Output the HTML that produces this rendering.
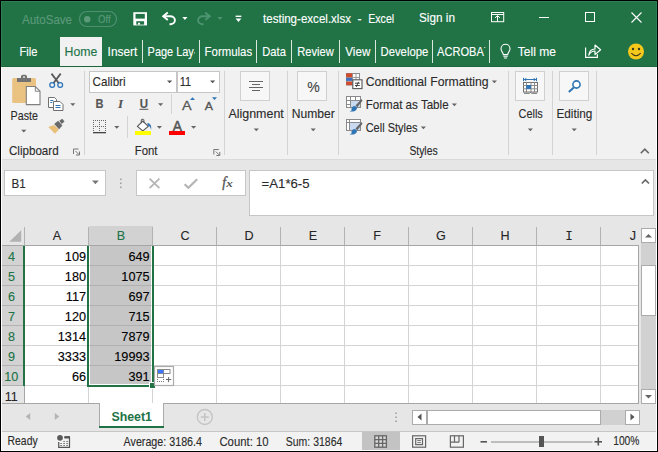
<!DOCTYPE html>
<html><head><meta charset="utf-8"><title>testing-excel.xlsx - Excel</title>
<style>
html,body{margin:0;padding:0;background:#000;overflow:hidden}
svg{display:block}
text{font-family:"Liberation Sans",sans-serif}
</style></head><body>
<svg width="658" height="452" viewBox="0 0 658 452">
<rect x="0" y="0" width="658" height="452" fill="#000" />
<rect x="1" y="1" width="656" height="66" fill="#217346" />
<rect x="1" y="67" width="656" height="92" fill="#f1f1f1" />
<rect x="1" y="159" width="656" height="1" fill="#dadada"/>
<rect x="1" y="160" width="656" height="66" fill="#e6e6e6" />
<text x="22" y="23.5" font-size="12.2" fill="#5c9a7a" stroke="#5c9a7a" stroke-width="0.12" textLength="50" lengthAdjust="spacingAndGlyphs" >AutoSave</text>
<rect x="79.5" y="11.5" width="37" height="15" rx="7.5" fill="none" stroke="#4f9070" stroke-width="1.2"/>
<circle cx="87.2" cy="19.2" r="3.2" fill="#5c9a7a"/>
<text x="98" y="23.3" font-size="10.5" fill="#5c9a7a" stroke="#5c9a7a" stroke-width="0.12" textLength="12.6" lengthAdjust="spacingAndGlyphs" >Off</text>
<rect x="133.300" y="12.200" width="13.700" height="13.200" fill="#fff"/>
<rect x="135.500" y="13.900" width="9.300" height="4.700" fill="#217346"/>
<rect x="136.300" y="21.200" width="7.800" height="3.400" fill="#217346"/>
<rect x="138" y="22.800" width="2" height="1.800" fill="#fff"/>
<g fill="none" stroke="#fff" stroke-width="1.900" stroke-linecap="butt"><path d="M163.500 16.200h6.800a4.600 4 0 0 1 0 8h-0.800"/><path d="M167.800 12.400l-4.600 3.800l4.600 3.800" stroke-linejoin="miter"/></g>
<path d="M182.3 17h5.2l-2.6 3z" fill="#fff"/>
<g fill="none" stroke="#4d9470" stroke-width="1.900"><path d="M209.500 16.200h-6.800a4.600 4 0 0 0 0 8h0.800"/><path d="M205.200 12.400l4.600 3.800l-4.600 3.800"/></g>
<path d="M217.4 17h5.2l-2.6 3z" fill="#4d9470"/>
<rect x="235.6" y="15.6" width="5.800000000000011" height="1.4" fill="#fff"/>
<path d="M235.6 18.4h5.8l-2.9 3.5z" fill="#fff"/>
<text x="263" y="22.6" font-size="12.2" fill="#fff" stroke="#fff" stroke-width="0.12" textLength="88" lengthAdjust="spacingAndGlyphs" >testing-excel.xlsx</text>
<text x="357.6" y="22.6" font-size="12.2" fill="#fff" stroke="#fff" stroke-width="0.12" >-</text>
<text x="368.2" y="22.6" font-size="12.2" fill="#fff" stroke="#fff" stroke-width="0.12" textLength="26" lengthAdjust="spacingAndGlyphs" >Excel</text>
<text x="419" y="21.6" font-size="12.2" fill="#fff" stroke="#fff" stroke-width="0.12" textLength="36" lengthAdjust="spacingAndGlyphs" >Sign in</text>
<g fill="none" stroke="#fff" stroke-width="1"><rect x="491.500" y="12.500" width="12.200" height="9.200"/><path d="M491.500 14.500h12.200"/><path d="M497.500 21.500v-5.600M495 17.900l2.500-2.300l2.500 2.300"/></g>
<rect x="539" y="17" width="10" height="1" fill="#fff"/>
<rect x="585.5" y="12.5" width="9" height="9" fill="none" stroke="#fff"/>
<path d="M631.5 12.5l10 10M641.5 12.5l-10 10" stroke="#fff" stroke-width="1.1" fill="none"/>
<rect x="60" y="37" width="42" height="30" fill="#f1f1f1" />
<text x="19.5" y="55.8" font-size="12.2" fill="#fff" stroke="#fff" stroke-width="0.12" textLength="18" lengthAdjust="spacingAndGlyphs" >File</text>
<text x="64.6" y="55.8" font-size="12.2" fill="#217346" stroke="#217346" stroke-width="0.12" textLength="32.8" lengthAdjust="spacingAndGlyphs" >Home</text>
<text x="107.6" y="55.8" font-size="12.2" fill="#fff" stroke="#fff" stroke-width="0.12" textLength="29.6" lengthAdjust="spacingAndGlyphs" >Insert</text>
<text x="147.6" y="55.8" font-size="12.2" fill="#fff" stroke="#fff" stroke-width="0.12" textLength="46.2" lengthAdjust="spacingAndGlyphs" >Page Lay</text>
<text x="204.6" y="55.8" font-size="12.2" fill="#fff" stroke="#fff" stroke-width="0.12" textLength="47.5" lengthAdjust="spacingAndGlyphs" >Formulas</text>
<text x="262.3" y="55.8" font-size="12.2" fill="#fff" stroke="#fff" stroke-width="0.12" textLength="23.6" lengthAdjust="spacingAndGlyphs" >Data</text>
<text x="297.3" y="55.8" font-size="12.2" fill="#fff" stroke="#fff" stroke-width="0.12" textLength="36.5" lengthAdjust="spacingAndGlyphs" >Review</text>
<text x="345.3" y="55.8" font-size="12.2" fill="#fff" stroke="#fff" stroke-width="0.12" textLength="25" lengthAdjust="spacingAndGlyphs" >View</text>
<text x="380.5" y="55.8" font-size="12.2" fill="#fff" stroke="#fff" stroke-width="0.12" textLength="47.8" lengthAdjust="spacingAndGlyphs" >Develope</text>
<text x="437" y="55.8" font-size="12.2" fill="#fff" stroke="#fff" stroke-width="0.12" textLength="46.8" lengthAdjust="spacingAndGlyphs" >ACROBA</text>
<text x="517.8" y="55.8" font-size="12.2" fill="#fff" stroke="#fff" stroke-width="0.12" textLength="38.2" lengthAdjust="spacingAndGlyphs" >Tell me</text>
<rect x="194" y="52" width="0.8" height="1.8" fill="#9cc3ad" />
<rect x="484.3" y="47" width="1" height="1" fill="#e0ede5" />
<rect x="142" y="40" width="1" height="23" fill="#dbe8e0"/>
<rect x="199" y="40" width="1" height="23" fill="#dbe8e0"/>
<rect x="256" y="40" width="1" height="23" fill="#dbe8e0"/>
<rect x="291" y="40" width="1" height="23" fill="#dbe8e0"/>
<rect x="339" y="40" width="1" height="23" fill="#dbe8e0"/>
<rect x="375" y="40" width="1" height="23" fill="#dbe8e0"/>
<rect x="432" y="40" width="1" height="23" fill="#dbe8e0"/>
<rect x="489" y="40" width="1" height="23" fill="#dbe8e0"/>
<g fill="none" stroke="#fff" stroke-width="1.100"><path d="M503.300 54.600c0-2.200-2.300-2.800-2.300-5.800a4.500 4.500 0 0 1 9 0c0 3-2.300 3.600-2.300 5.800z"/><path d="M503.300 56.300h4.400M503.900 58h3.200"/></g>
<g fill="none" stroke="#fff" stroke-width="1.200"><path d="M585.600 47.600v9.800h11.800v-3.200"/><path d="M588.700 55.200c0.400-3.800 2.600-6 6.300-6.200v-4l5.600 4.800l-5.600 4.800v-3.600c-2.800 0-4.700 1-6.300 4.200z" stroke-linejoin="round"/></g>
<circle cx="636" cy="51.500" r="8" fill="#f6c81c"/><circle cx="633" cy="49" r="1.200" fill="#3a3a1a"/><circle cx="639" cy="49" r="1.200" fill="#3a3a1a"/><path d="M631.300 53.200q4.700 5 9.400 0" fill="none" stroke="#3a3a1a" stroke-width="1.100"/>
<rect x="84" y="71" width="1" height="84" fill="#d3d3d3"/>
<rect x="224" y="71" width="1" height="84" fill="#d3d3d3"/>
<rect x="287" y="71" width="1" height="84" fill="#d3d3d3"/>
<rect x="338" y="71" width="1" height="84" fill="#d3d3d3"/>
<rect x="508" y="71" width="1" height="84" fill="#d3d3d3"/>
<rect x="552" y="71" width="1" height="84" fill="#d3d3d3"/>
<rect x="596" y="71" width="1" height="84" fill="#d3d3d3"/>
<rect x="12.200" y="77.900" width="23.800" height="25.100" rx="1.500" fill="#eac282"/>
<path d="M17 82v-4.100h4v-1.400a1.800 1.800 0 0 1 1.800-1.800h2.400a1.800 1.800 0 0 1 1.800 1.800v1.400h4v4.100z" fill="#737373"/><rect x="23" y="76.200" width="2" height="1.600" fill="#d8d8d8"/>
<path d="M26.300 86.500h9l4.700 4.700v13.400h-13.700z" fill="#fff" stroke="#808080" stroke-width="1.100"/><path d="M35.300 86.500v4.700h4.700" fill="none" stroke="#808080"/>
<text x="10.6" y="119.8" font-size="12.2" fill="#2b2b2b" stroke="#2b2b2b" stroke-width="0.12" textLength="27.4" lengthAdjust="spacingAndGlyphs" >Paste</text>
<path d="M21.2 129.8h5.2l-2.6 2.8z" fill="#666"/>
<g fill="none"><path d="M51.500 73.600l7.300 9.600M60.700 73.600l-7.300 9.600" stroke="#595959" stroke-width="1.800"/><circle cx="52.200" cy="85" r="2.400" stroke="#2f75b5" stroke-width="1.300"/><circle cx="60.200" cy="85" r="2.400" stroke="#2f75b5" stroke-width="1.300"/></g>
<g fill="#fff" stroke="#707070" stroke-width="1"><path d="M48.500 97.500h6l2 2v8h-8z"/><path d="M53.500 101.500h6.500l3 3v6h-9.500z"/></g><path d="M50.300 100.500h3M50.300 102.500h2M55.500 105.500h5M55.500 107.500h5" stroke="#2f75b5" stroke-width="1"/>
<path d="M70.2 103.3h5.2l-2.6 2.8z" fill="#666"/>
<path d="M48.300 126.900l5.600-2l5 4.700l-4 4.200z" fill="#eabf78"/><path d="M54.200 124l3.900-3.300l4.300 4.900l-3.300 3.700z" fill="#6a6a6a"/><path d="M59.300 120.800l3-2l2.200 2.600l-2.800 2.500z" fill="#6a6a6a"/>
<text x="9" y="155.2" font-size="12.2" fill="#2b2b2b" stroke="#2b2b2b" stroke-width="0.12" textLength="49.6" lengthAdjust="spacingAndGlyphs" >Clipboard</text>
<g fill="none" stroke="#777" stroke-width="1"><path d="M73.5 154.0v-5h5"/><path d="M75.5 151.0l3.500 3.500M79.5 151.5v3.500h-3.500"/></g>
<rect x="89.5" y="71.5" width="87" height="21" fill="#fff" stroke="#c6c6c6" stroke-width="1" />
<rect x="177.5" y="71.5" width="42" height="21" fill="#fff" stroke="#c6c6c6" stroke-width="1" />
<text x="92.6" y="86" font-size="12.2" fill="#2b2b2b" stroke="#2b2b2b" stroke-width="0.12" textLength="33" lengthAdjust="spacingAndGlyphs" >Calibri</text>
<path d="M167 80.4h5.2l-2.6 2.8z" fill="#555"/>
<text x="179.8" y="86" font-size="12.2" fill="#2b2b2b" stroke="#2b2b2b" stroke-width="0.12" textLength="11.4" lengthAdjust="spacingAndGlyphs" >11</text>
<path d="M210 80.4h5.2l-2.6 2.8z" fill="#555"/>
<text x="95.5" y="108" font-size="12.5" fill="#555" stroke="#555" stroke-width="0.12" textLength="8" lengthAdjust="spacingAndGlyphs" font-weight="bold" >B</text>
<text x="118" y="108" font-size="13" fill="#555" stroke="#555" stroke-width="0.12" font-weight="bold" font-style="italic" style="font-family:'Liberation Serif',serif" >I</text>
<text x="139.7" y="107.8" font-size="12" fill="#555" stroke="#555" stroke-width="0.12" textLength="8.3" lengthAdjust="spacingAndGlyphs" font-weight="bold" >U</text>
<rect x="139.5" y="108.8" width="8.800000000000011" height="1" fill="#555"/>
<path d="M158 103.3h5.2l-2.6 2.8z" fill="#666"/>
<rect x="171" y="94" width="1" height="20" fill="#d3d3d3"/>
<text x="182" y="109.7" font-size="13.7" fill="#555" stroke="#555" stroke-width="0.3" textLength="9.6" lengthAdjust="spacingAndGlyphs" >A</text>
<path d="M190 100h5l-2.500-2.800z" fill="#2f75b5"/>
<text x="204.8" y="109.7" font-size="10.7" fill="#555" stroke="#555" stroke-width="0.3" textLength="8.2" lengthAdjust="spacingAndGlyphs" >A</text>
<path d="M212 97.300h5l-2.500 2.800z" fill="#2f75b5"/>
<rect x="93" y="120" width="1" height="1" fill="#666" />
<rect x="99" y="120" width="1" height="1" fill="#666" />
<rect x="105" y="120" width="1" height="1" fill="#666" />
<rect x="93" y="122" width="1" height="1" fill="#666" />
<rect x="99" y="122" width="1" height="1" fill="#666" />
<rect x="105" y="122" width="1" height="1" fill="#666" />
<rect x="93" y="124" width="1" height="1" fill="#666" />
<rect x="99" y="124" width="1" height="1" fill="#666" />
<rect x="105" y="124" width="1" height="1" fill="#666" />
<rect x="93" y="126" width="1" height="1" fill="#666" />
<rect x="99" y="126" width="1" height="1" fill="#666" />
<rect x="105" y="126" width="1" height="1" fill="#666" />
<rect x="93" y="128" width="1" height="1" fill="#666" />
<rect x="99" y="128" width="1" height="1" fill="#666" />
<rect x="105" y="128" width="1" height="1" fill="#666" />
<rect x="93" y="130" width="1" height="1" fill="#666" />
<rect x="99" y="130" width="1" height="1" fill="#666" />
<rect x="105" y="130" width="1" height="1" fill="#666" />
<rect x="93" y="120" width="1" height="1" fill="#666" />
<rect x="93" y="126" width="1" height="1" fill="#666" />
<rect x="95" y="120" width="1" height="1" fill="#666" />
<rect x="95" y="126" width="1" height="1" fill="#666" />
<rect x="97" y="120" width="1" height="1" fill="#666" />
<rect x="97" y="126" width="1" height="1" fill="#666" />
<rect x="99" y="120" width="1" height="1" fill="#666" />
<rect x="99" y="126" width="1" height="1" fill="#666" />
<rect x="101" y="120" width="1" height="1" fill="#666" />
<rect x="101" y="126" width="1" height="1" fill="#666" />
<rect x="103" y="120" width="1" height="1" fill="#666" />
<rect x="103" y="126" width="1" height="1" fill="#666" />
<rect x="105" y="120" width="1" height="1" fill="#666" />
<rect x="105" y="126" width="1" height="1" fill="#666" />
<rect x="93" y="132" width="13" height="1.3" fill="#444"/>
<path d="M114.2 126h5.2l-2.6 2.8z" fill="#666"/>
<rect x="127" y="116" width="1" height="22" fill="#d3d3d3"/>
<path d="M137.400 126.400l5.400-5.300l5.500 5.300l-5.500 4.500z" fill="#fff" stroke="#555" stroke-width="1.200" stroke-linejoin="round"/><path d="M141.300 123.200v-3.200a0.700 0.700 0 0 1 0.700-0.700h1.200a0.700 0.700 0 0 1 0.700 0.700v2.600" fill="none" stroke="#555" stroke-width="1"/><path d="M147.300 122.900c3 0.300 4.500 2.500 3.800 6.900c-0.700-2.600-1.600-3.600-3.200-4.200z" fill="#2f75b5"/>
<rect x="135" y="131" width="16" height="4" fill="#ffff00" />
<path d="M156.8 126h5.2l-2.6 2.8z" fill="#666"/>
<text x="172.8" y="130.7" font-size="14" fill="#555" stroke="#555" stroke-width="0.5" textLength="9.2" lengthAdjust="spacingAndGlyphs" >A</text>
<rect x="169" y="131" width="16" height="4" fill="#ff0000" />
<path d="M191 126h5.2l-2.6 2.8z" fill="#666"/>
<text x="134.7" y="154.8" font-size="12.2" fill="#2b2b2b" stroke="#2b2b2b" stroke-width="0.12" textLength="22.8" lengthAdjust="spacingAndGlyphs" >Font</text>
<g fill="none" stroke="#777" stroke-width="1"><path d="M213.8 154.5v-5h5"/><path d="M215.8 151.5l3.500 3.500M219.8 152v3.500h-3.500"/></g>
<rect x="240.5" y="71.5" width="29" height="29" fill="#f7f7f7" stroke="#d0d0d0" stroke-width="1" />
<rect x="249" y="81" width="14" height="1" fill="#666"/>
<rect x="252" y="84" width="8" height="1" fill="#666"/>
<rect x="249" y="87" width="14" height="1" fill="#666"/>
<rect x="252" y="90" width="8" height="1" fill="#666"/>
<text x="228.4" y="118" font-size="12.2" fill="#2b2b2b" stroke="#2b2b2b" stroke-width="0.12" textLength="55.4" lengthAdjust="spacingAndGlyphs" >Alignment</text>
<path d="M253.7 128.4h5.2l-2.6 2.8z" fill="#666"/>
<rect x="297.5" y="71.5" width="29" height="29" fill="#f7f7f7" stroke="#d0d0d0" stroke-width="1" />
<text x="307.3" y="91.8" font-size="15" fill="#444" stroke="#444" stroke-width="0.12" textLength="12.5" lengthAdjust="spacingAndGlyphs" >%</text>
<text x="291.8" y="118" font-size="12.2" fill="#2b2b2b" stroke="#2b2b2b" stroke-width="0.12" textLength="43" lengthAdjust="spacingAndGlyphs" >Number</text>
<path d="M310.6 128.4h5.2l-2.6 2.8z" fill="#666"/>
<g><rect x="346.500" y="73.500" width="13" height="11.500" fill="#fff" stroke="#8a8a8a"/><path d="M352.500 73.500v11.500M356 73.500v6M346.500 77.500h13M346.500 81.300h6" stroke="#9a9a9a" fill="none"/><rect x="346.200" y="73.400" width="6" height="3.800" fill="#d24a2b"/><rect x="346.200" y="77.900" width="6" height="3" fill="#3f6fc0"/><rect x="346.200" y="81.700" width="6" height="3.400" fill="#d24a2b"/><rect x="352.800" y="79.800" width="9.200" height="8.800" fill="#fff" stroke="#555" stroke-width="1.100"/><path d="M355 83.200h4.800M355 85.500h4.800M358.600 81.800l-2.400 5.200" stroke="#333" stroke-width="0.900" fill="none"/></g>
<g><rect x="346.5" y="96.5" width="14" height="11" fill="#fff" stroke="#8a8a8a"/>
<path d="M346 100.5h15M346 104.5h15M350.5 96v12M355.5 96v12" stroke="#8a8a8a" fill="none"/>
<rect x="351" y="101" width="9" height="6" fill="#c9daf0"/>
<path d="M361.5 99l-6 6.500l1.800 1.800l5.200-6.500z" fill="#666"/><path d="M355 106c-2.500 0-4 1.500-3.500 4.500c-1 0.500-1.500 0.800-2 1c3.500 0.500 7.500-0.500 7.500-3.800z" fill="#2f75b5"/></g>
<g><rect x="346.5" y="119.5" width="14" height="11" fill="#fff" stroke="#8a8a8a"/>
<path d="M346 122.5h15M349.5 119v12" stroke="#8a8a8a" fill="none"/>
<rect x="350" y="123" width="10" height="7" fill="#c9daf0"/>
<path d="M361.5 122l-6 6.500l1.800 1.800l5.200-6.500z" fill="#666"/><path d="M355 129c-2.500 0-4 1.500-3.500 4.500c-1 0.500-1.500 0.800-2 1c3.500 0.500 7.500-0.500 7.500-3.800z" fill="#2f75b5"/></g>
<text x="365.7" y="85.5" font-size="12.2" fill="#2b2b2b" stroke="#2b2b2b" stroke-width="0.12" textLength="122.9" lengthAdjust="spacingAndGlyphs" >Conditional Formatting</text>
<path d="M491.8 80.4h5.2l-2.6 2.8z" fill="#666"/>
<text x="365.7" y="108.5" font-size="12.2" fill="#2b2b2b" stroke="#2b2b2b" stroke-width="0.12" textLength="82.9" lengthAdjust="spacingAndGlyphs" >Format as Table</text>
<path d="M451.8 103.4h5.2l-2.6 2.8z" fill="#666"/>
<text x="365.7" y="131.5" font-size="12.2" fill="#2b2b2b" stroke="#2b2b2b" stroke-width="0.12" textLength="51.9" lengthAdjust="spacingAndGlyphs" >Cell Styles</text>
<path d="M420.8 126.4h5.2l-2.6 2.8z" fill="#666"/>
<text x="409.4" y="154.8" font-size="12.2" fill="#2b2b2b" stroke="#2b2b2b" stroke-width="0.12" textLength="28.2" lengthAdjust="spacingAndGlyphs" >Styles</text>
<rect x="515.5" y="71.5" width="29" height="29" fill="#f7f7f7" stroke="#d0d0d0" stroke-width="1" />
<g><path d="M523.500 77.800v3.400M536.500 77.800v3.400M524 79.500h12" stroke="#2f75b5" fill="none"/><path d="M526.200 77.800l-2.200 1.700l2.200 1.700zM533.800 77.800l2.200 1.700l-2.200 1.700z" fill="#2f75b5"/><rect x="523.500" y="82.500" width="14" height="9.500" fill="#fff" stroke="#707070"/><path d="M523 85.500h15M523 88.800h15M526.500 82v10M531 82v10M534.500 82v10" stroke="#8a8a8a" fill="none"/><path d="M524 93.300h5.500l1 -1l1 1h5.500" stroke="#707070" fill="none"/><rect x="526.200" y="85" width="4.800" height="3.900" fill="#2f75b5"/></g>
<text x="518.5" y="118" font-size="12.2" fill="#2b2b2b" stroke="#2b2b2b" stroke-width="0.12" textLength="24.3" lengthAdjust="spacingAndGlyphs" >Cells</text>
<path d="M527.8 128.4h5.2l-2.6 2.8z" fill="#666"/>
<rect x="559.5" y="71.5" width="29" height="29" fill="#f7f7f7" stroke="#d0d0d0" stroke-width="1" />
<circle cx="576.500" cy="84.500" r="3.600" fill="#fff" stroke="#2f75b5" stroke-width="1.600"/><path d="M573.800 87.400l-5 4.600" stroke="#2f75b5" stroke-width="2"/>
<text x="556.4" y="118" font-size="12.2" fill="#2b2b2b" stroke="#2b2b2b" stroke-width="0.12" textLength="36" lengthAdjust="spacingAndGlyphs" >Editing</text>
<path d="M571.6 128.4h5.2l-2.6 2.8z" fill="#666"/>
<path d="M640.800 153.200l4-4l4 4" fill="none" stroke="#666" stroke-width="1.600"/>
<rect x="4.5" y="170.5" width="101" height="25" fill="#fff" stroke="#c6c6c6" stroke-width="1" />
<text x="11.5" y="187.8" font-size="12" fill="#2b2b2b" stroke="#2b2b2b" stroke-width="0.12" textLength="14.2" lengthAdjust="spacingAndGlyphs" >B1</text>
<path d="M92 180.5h6.8l-3.4 3.8z" fill="#777"/>
<rect x="120" y="178.5" width="1.6" height="1.6" fill="#a3a3a3" />
<rect x="120" y="182.5" width="1.6" height="1.6" fill="#a3a3a3" />
<rect x="120" y="186.5" width="1.6" height="1.6" fill="#a3a3a3" />
<rect x="136.5" y="170.5" width="109" height="25" fill="#fff" stroke="#c6c6c6" stroke-width="1" />
<path d="M149.600 178.600l9.800 9.600M159.400 178.600l-9.800 9.600" stroke="#b4b4b4" stroke-width="1.700" fill="none"/>
<path d="M184.600 184.200l3.800 3.600l8.800-8.600" stroke="#b4b4b4" stroke-width="2.100" fill="none"/>
<text x="222.2" y="187.3" font-size="13.6" fill="#555" stroke="#555" stroke-width="0.35" font-style="italic" style="font-family:'Liberation Serif',serif" >f</text>
<text x="226.3" y="187" font-size="10.5" fill="#555" textLength="6.5" lengthAdjust="spacingAndGlyphs" font-weight="bold" font-style="italic" style="font-family:'Liberation Serif',serif" >x</text>
<rect x="249.5" y="170.5" width="404" height="45" fill="#fff" stroke="#c6c6c6" stroke-width="1" />
<text x="261.6" y="188" font-size="12" fill="#2b2b2b" stroke="#2b2b2b" stroke-width="0.12" textLength="48" lengthAdjust="spacingAndGlyphs" >=A1*6-5</text>
<path d="M641.800 183.500l3.600-3.600l3.600 3.600" fill="none" stroke="#666" stroke-width="1.600"/>
<rect x="1" y="226" width="638" height="20" fill="#e6e6e6" />
<rect x="25" y="246" width="613" height="157" fill="#fff" />
<path d="M21.200 230.300v11.400h-11.900z" fill="#b2b2b2"/>
<rect x="89" y="226" width="64" height="19" fill="#d2d2d2" />
<text x="57" y="239.8" font-size="12.6" fill="#262626" stroke="#262626" stroke-width="0.12" text-anchor="middle" >A</text>
<text x="121" y="239.8" font-size="12.6" fill="#217346" stroke="#217346" stroke-width="0.12" text-anchor="middle" >B</text>
<text x="185" y="239.8" font-size="12.6" fill="#262626" stroke="#262626" stroke-width="0.12" text-anchor="middle" >C</text>
<text x="249" y="239.8" font-size="12.6" fill="#262626" stroke="#262626" stroke-width="0.12" text-anchor="middle" >D</text>
<text x="313" y="239.8" font-size="12.6" fill="#262626" stroke="#262626" stroke-width="0.12" text-anchor="middle" >E</text>
<text x="377" y="239.8" font-size="12.6" fill="#262626" stroke="#262626" stroke-width="0.12" text-anchor="middle" >F</text>
<text x="441" y="239.8" font-size="12.6" fill="#262626" stroke="#262626" stroke-width="0.12" text-anchor="middle" >G</text>
<text x="505" y="239.8" font-size="12.6" fill="#262626" stroke="#262626" stroke-width="0.12" text-anchor="middle" >H</text>
<text x="569" y="239.8" font-size="12.6" fill="#262626" stroke="#262626" stroke-width="0.12" text-anchor="middle" style="font-family:'Liberation Mono',monospace" >I</text>
<text x="633" y="239.8" font-size="12.6" fill="#262626" stroke="#262626" stroke-width="0.12" text-anchor="middle" >J</text>
<rect x="24" y="227" width="1" height="18" fill="#b2b2b2"/>
<rect x="88" y="227" width="1" height="18" fill="#b2b2b2"/>
<rect x="152" y="227" width="1" height="18" fill="#b2b2b2"/>
<rect x="216" y="227" width="1" height="18" fill="#b2b2b2"/>
<rect x="280" y="227" width="1" height="18" fill="#b2b2b2"/>
<rect x="344" y="227" width="1" height="18" fill="#b2b2b2"/>
<rect x="408" y="227" width="1" height="18" fill="#b2b2b2"/>
<rect x="472" y="227" width="1" height="18" fill="#b2b2b2"/>
<rect x="536" y="227" width="1" height="18" fill="#b2b2b2"/>
<rect x="600" y="227" width="1" height="18" fill="#b2b2b2"/>
<rect x="1" y="245" width="638" height="1" fill="#a6a6a6"/>
<rect x="1" y="246" width="23" height="140" fill="#d2d2d2" />
<rect x="1" y="386" width="23" height="17" fill="#e6e6e6" />
<text x="11.6" y="261" font-size="12.6" fill="#217346" stroke="#217346" stroke-width="0.12" text-anchor="middle" >4</text>
<rect x="1" y="265" width="23" height="1" fill="#b2b2b2"/>
<text x="11.6" y="281" font-size="12.6" fill="#217346" stroke="#217346" stroke-width="0.12" text-anchor="middle" >5</text>
<rect x="1" y="285" width="23" height="1" fill="#b2b2b2"/>
<text x="11.6" y="301" font-size="12.6" fill="#217346" stroke="#217346" stroke-width="0.12" text-anchor="middle" >6</text>
<rect x="1" y="305" width="23" height="1" fill="#b2b2b2"/>
<text x="11.6" y="321" font-size="12.6" fill="#217346" stroke="#217346" stroke-width="0.12" text-anchor="middle" >7</text>
<rect x="1" y="325" width="23" height="1" fill="#b2b2b2"/>
<text x="11.6" y="341" font-size="12.6" fill="#217346" stroke="#217346" stroke-width="0.12" text-anchor="middle" >8</text>
<rect x="1" y="345" width="23" height="1" fill="#b2b2b2"/>
<text x="11.6" y="361" font-size="12.6" fill="#217346" stroke="#217346" stroke-width="0.12" text-anchor="middle" >9</text>
<rect x="1" y="365" width="23" height="1" fill="#b2b2b2"/>
<text x="11.3" y="381" font-size="12.6" fill="#217346" stroke="#217346" stroke-width="0.12" text-anchor="middle" >10</text>
<rect x="1" y="385" width="23" height="1" fill="#b2b2b2"/>
<text x="11.3" y="401" font-size="12.6" fill="#262626" stroke="#262626" stroke-width="0.12" text-anchor="middle" >11</text>
<rect x="1" y="405" width="23" height="1" fill="#b2b2b2"/>
<rect x="88" y="246" width="1" height="157" fill="#d4d4d4"/>
<rect x="152" y="246" width="1" height="157" fill="#d4d4d4"/>
<rect x="216" y="246" width="1" height="157" fill="#d4d4d4"/>
<rect x="280" y="246" width="1" height="157" fill="#d4d4d4"/>
<rect x="344" y="246" width="1" height="157" fill="#d4d4d4"/>
<rect x="408" y="246" width="1" height="157" fill="#d4d4d4"/>
<rect x="472" y="246" width="1" height="157" fill="#d4d4d4"/>
<rect x="536" y="246" width="1" height="157" fill="#d4d4d4"/>
<rect x="600" y="246" width="1" height="157" fill="#d4d4d4"/>
<rect x="25" y="265" width="613" height="1" fill="#d4d4d4"/>
<rect x="25" y="285" width="613" height="1" fill="#d4d4d4"/>
<rect x="25" y="305" width="613" height="1" fill="#d4d4d4"/>
<rect x="25" y="325" width="613" height="1" fill="#d4d4d4"/>
<rect x="25" y="345" width="613" height="1" fill="#d4d4d4"/>
<rect x="25" y="365" width="613" height="1" fill="#d4d4d4"/>
<rect x="25" y="385" width="613" height="1" fill="#d4d4d4"/>
<rect x="24" y="386" width="1" height="17" fill="#a6a6a6"/>
<rect x="90" y="246" width="61" height="138" fill="#c6c6c6" />
<rect x="90" y="265" width="61" height="1" fill="#b0b0b0"/>
<rect x="90" y="285" width="61" height="1" fill="#b0b0b0"/>
<rect x="90" y="305" width="61" height="1" fill="#b0b0b0"/>
<rect x="90" y="325" width="61" height="1" fill="#b0b0b0"/>
<rect x="90" y="345" width="61" height="1" fill="#b0b0b0"/>
<rect x="90" y="365" width="61" height="1" fill="#b0b0b0"/>
<text x="86" y="261" font-size="12.7" fill="#000" stroke="#000" stroke-width="0.12" text-anchor="end" >109</text>
<text x="149.6" y="261" font-size="12.7" fill="#000" stroke="#000" stroke-width="0.12" text-anchor="end" >649</text>
<text x="86" y="281" font-size="12.7" fill="#000" stroke="#000" stroke-width="0.12" text-anchor="end" >180</text>
<text x="149.6" y="281" font-size="12.7" fill="#000" stroke="#000" stroke-width="0.12" text-anchor="end" >1075</text>
<text x="86" y="301" font-size="12.7" fill="#000" stroke="#000" stroke-width="0.12" text-anchor="end" >117</text>
<text x="149.6" y="301" font-size="12.7" fill="#000" stroke="#000" stroke-width="0.12" text-anchor="end" >697</text>
<text x="86" y="321" font-size="12.7" fill="#000" stroke="#000" stroke-width="0.12" text-anchor="end" >120</text>
<text x="149.6" y="321" font-size="12.7" fill="#000" stroke="#000" stroke-width="0.12" text-anchor="end" >715</text>
<text x="86" y="341" font-size="12.7" fill="#000" stroke="#000" stroke-width="0.12" text-anchor="end" >1314</text>
<text x="149.6" y="341" font-size="12.7" fill="#000" stroke="#000" stroke-width="0.12" text-anchor="end" >7879</text>
<text x="86" y="361" font-size="12.7" fill="#000" stroke="#000" stroke-width="0.12" text-anchor="end" >3333</text>
<text x="149.6" y="361" font-size="12.7" fill="#000" stroke="#000" stroke-width="0.12" text-anchor="end" >19993</text>
<text x="86" y="381" font-size="12.7" fill="#000" stroke="#000" stroke-width="0.12" text-anchor="end" >66</text>
<text x="149.6" y="381" font-size="12.7" fill="#000" stroke="#000" stroke-width="0.12" text-anchor="end" >391</text>
<rect x="23" y="246" width="2" height="140" fill="#217346" />
<rect x="87" y="246" width="2" height="140" fill="#217346" />
<rect x="152" y="246" width="2" height="137" fill="#217346" />
<rect x="87" y="385" width="65" height="2" fill="#217346" />
<rect x="149" y="382" width="7" height="7" fill="#fff" />
<rect x="150" y="383" width="5" height="5" fill="#217346" />
<rect x="154.5" y="366.5" width="19" height="19" fill="#fff" stroke="#ababab" stroke-width="1.2" />
<g fill="#fff" stroke="#8a8a8a" stroke-width="1"><rect x="163.500" y="369.500" width="6.500" height="4"/><rect x="157.500" y="373.500" width="6" height="4"/><rect x="157.500" y="369.500" width="6" height="4"/></g><rect x="158" y="370" width="5.200" height="3.200" fill="#3c78ff"/>
<rect x="157" y="379" width="1" height="1" fill="#777" />
<rect x="163" y="379" width="1" height="1" fill="#777" />
<rect x="157" y="381" width="1" height="1" fill="#777" />
<rect x="159" y="381" width="1" height="1" fill="#777" />
<rect x="161" y="381" width="1" height="1" fill="#777" />
<rect x="163" y="381" width="1" height="1" fill="#777" />
<path d="M166 379.500h5.200M168.600 377v5.200" stroke="#666" stroke-width="1" fill="none"/>
<rect x="638" y="246" width="1" height="157" fill="#a6a6a6"/>
<rect x="639" y="226" width="18" height="178" fill="#e6e6e6" />
<rect x="641" y="243" width="15" height="146" fill="#d1d1d1" />
<rect x="641.5" y="228.5" width="14" height="14" fill="#fff" stroke="#ababab" stroke-width="1" />
<path d="M645 237.500h7l-3.500-3.500z" fill="#666"/>
<rect x="641.5" y="265.5" width="14" height="50" fill="#fff" stroke="#ababab" stroke-width="1" />
<rect x="641.5" y="389.5" width="14" height="14" fill="#fff" stroke="#ababab" stroke-width="1" />
<path d="M645 395h7l-3.500 3.500z" fill="#666"/>
<rect x="1" y="403" width="638" height="1" fill="#a6a6a6"/>
<rect x="1" y="404" width="656" height="27" fill="#e6e6e6" />
<path d="M30.200 413v7l-4.500-3.500z" fill="#b4b4b4"/><path d="M54.800 413v7l4.500-3.500z" fill="#b4b4b4"/>
<rect x="100" y="403" width="63" height="24" fill="#fff" />
<rect x="99" y="403" width="1" height="25" fill="#ababab"/>
<rect x="163" y="403" width="1" height="25" fill="#ababab"/>
<rect x="99" y="426" width="65" height="2" fill="#217346" />
<text x="111.4" y="420.5" font-size="13.2" fill="#217346" textLength="40.6" lengthAdjust="spacingAndGlyphs" font-weight="bold" >Sheet1</text>
<circle cx="204.800" cy="417" r="7.500" fill="none" stroke="#c3c3c3" stroke-width="1.300"/><path d="M200.800 417h8M204.800 413v8" stroke="#c3c3c3" stroke-width="1.500"/>
<rect x="395.3" y="412.5" width="1.5" height="1.5" fill="#9a9a9a" />
<rect x="395.3" y="416.5" width="1.5" height="1.5" fill="#9a9a9a" />
<rect x="395.3" y="420.5" width="1.5" height="1.5" fill="#9a9a9a" />
<rect x="427" y="410" width="198" height="15" fill="#d1d1d1" />
<rect x="412.5" y="410.5" width="14" height="14" fill="#fff" stroke="#ababab" stroke-width="1" />
<path d="M421.500 413.500v7l-4-3.500z" fill="#555"/>
<rect x="427.5" y="410.5" width="173" height="14" fill="#fff" stroke="#ababab" stroke-width="1" />
<rect x="625.5" y="410.5" width="14" height="14" fill="#fff" stroke="#ababab" stroke-width="1" />
<path d="M630.500 413.500v7l4-3.500z" fill="#555"/>
<rect x="1" y="431" width="656" height="1" fill="#c6c6c6"/>
<rect x="1" y="432" width="656" height="18" fill="#f2f2f2" />
<rect x="1" y="450" width="656" height="1" fill="#fff" />
<rect x="0" y="451" width="658" height="1" fill="#000" />
<text x="7.6" y="445" font-size="12.2" fill="#2b2b2b" stroke="#2b2b2b" stroke-width="0.12" textLength="30" lengthAdjust="spacingAndGlyphs" >Ready</text>
<path d="M58.700 442v5.300h10.800v-10h-5" fill="none" stroke="#555" stroke-width="1.200"/><rect x="64.400" y="436.100" width="5.600" height="2.400" fill="#555"/><circle cx="60" cy="437.800" r="3.700" fill="#f7f7f7"/><circle cx="60" cy="437.800" r="2.900" fill="#5a5a5a"/>
<rect x="63.3" y="441.2" width="1.6" height="0.8" fill="#555" />
<rect x="66.3" y="441.2" width="1.6" height="0.8" fill="#555" />
<rect x="60.3" y="443.2" width="1.6" height="0.8" fill="#555" />
<rect x="63.3" y="443.2" width="1.6" height="0.8" fill="#555" />
<rect x="66.3" y="443.2" width="1.6" height="0.8" fill="#555" />
<rect x="60.3" y="445.2" width="1.6" height="0.8" fill="#555" />
<rect x="63.3" y="445.2" width="1.6" height="0.8" fill="#555" />
<rect x="66.3" y="445.2" width="1.6" height="0.8" fill="#555" />
<text x="123.6" y="445.5" font-size="12.2" fill="#2b2b2b" stroke="#2b2b2b" stroke-width="0.12" textLength="78.4" lengthAdjust="spacingAndGlyphs" >Average: 3186.4</text>
<text x="219.4" y="445.5" font-size="12.2" fill="#2b2b2b" stroke="#2b2b2b" stroke-width="0.12" textLength="49.2" lengthAdjust="spacingAndGlyphs" >Count: 10</text>
<text x="285.8" y="445.5" font-size="12.2" fill="#2b2b2b" stroke="#2b2b2b" stroke-width="0.12" textLength="56.5" lengthAdjust="spacingAndGlyphs" >Sum: 31864</text>
<rect x="362" y="432" width="38" height="18" fill="#c3c3c3" />
<g fill="none" stroke="#666" stroke-width="1.300"><rect x="374.800" y="435.800" width="11.600" height="11.400" fill="#d8d8d8"/><path d="M378.700 435.800v11.400M382.600 435.800v11.400M374.800 439.600h11.600M374.800 443.400h11.600"/></g>
<g fill="none" stroke="#666" stroke-width="1.200"><rect x="412.600" y="435.800" width="13" height="11.400"/><rect x="415.700" y="438.600" width="6.800" height="6"/><path d="M417.300 440.500h3.600M417.300 442.600h3.600" stroke-width="0.900"/></g>
<g fill="none" stroke="#666" stroke-width="1.200"><rect x="450.400" y="435.800" width="13" height="11.400"/><path d="M454.500 435.800v6.400M459 435.800v6.400M450.400 442.200h8.600"/></g>
<rect x="480.5" y="441" width="6.5" height="1.6" fill="#555"/>
<rect x="491" y="441.5" width="101.5" height="1" fill="#8a8a8a"/>
<rect x="539" y="436" width="5" height="11" fill="#555" />
<rect x="594.5" y="441" width="7.5" height="1.6" fill="#555"/>
<rect x="597.5" y="437.5" width="1.6" height="8.0" fill="#555"/>
<text x="613.2" y="445" font-size="12.2" fill="#2b2b2b" stroke="#2b2b2b" stroke-width="0.12" textLength="26.2" lengthAdjust="spacingAndGlyphs" >100%</text>
<rect x="1" y="1" width="656" height="1" fill="#2a8153"/>
<rect x="1" y="1" width="1" height="65" fill="#2a8153"/>
<rect x="656" y="1" width="1" height="65" fill="#2a8153"/>
<rect x="1" y="66" width="656" height="1" fill="#1c663c"/>
<rect x="1" y="67" width="1" height="384" fill="#fff"/>
<rect x="656" y="67" width="1" height="384" fill="#fff"/>
</svg>
</body></html>
